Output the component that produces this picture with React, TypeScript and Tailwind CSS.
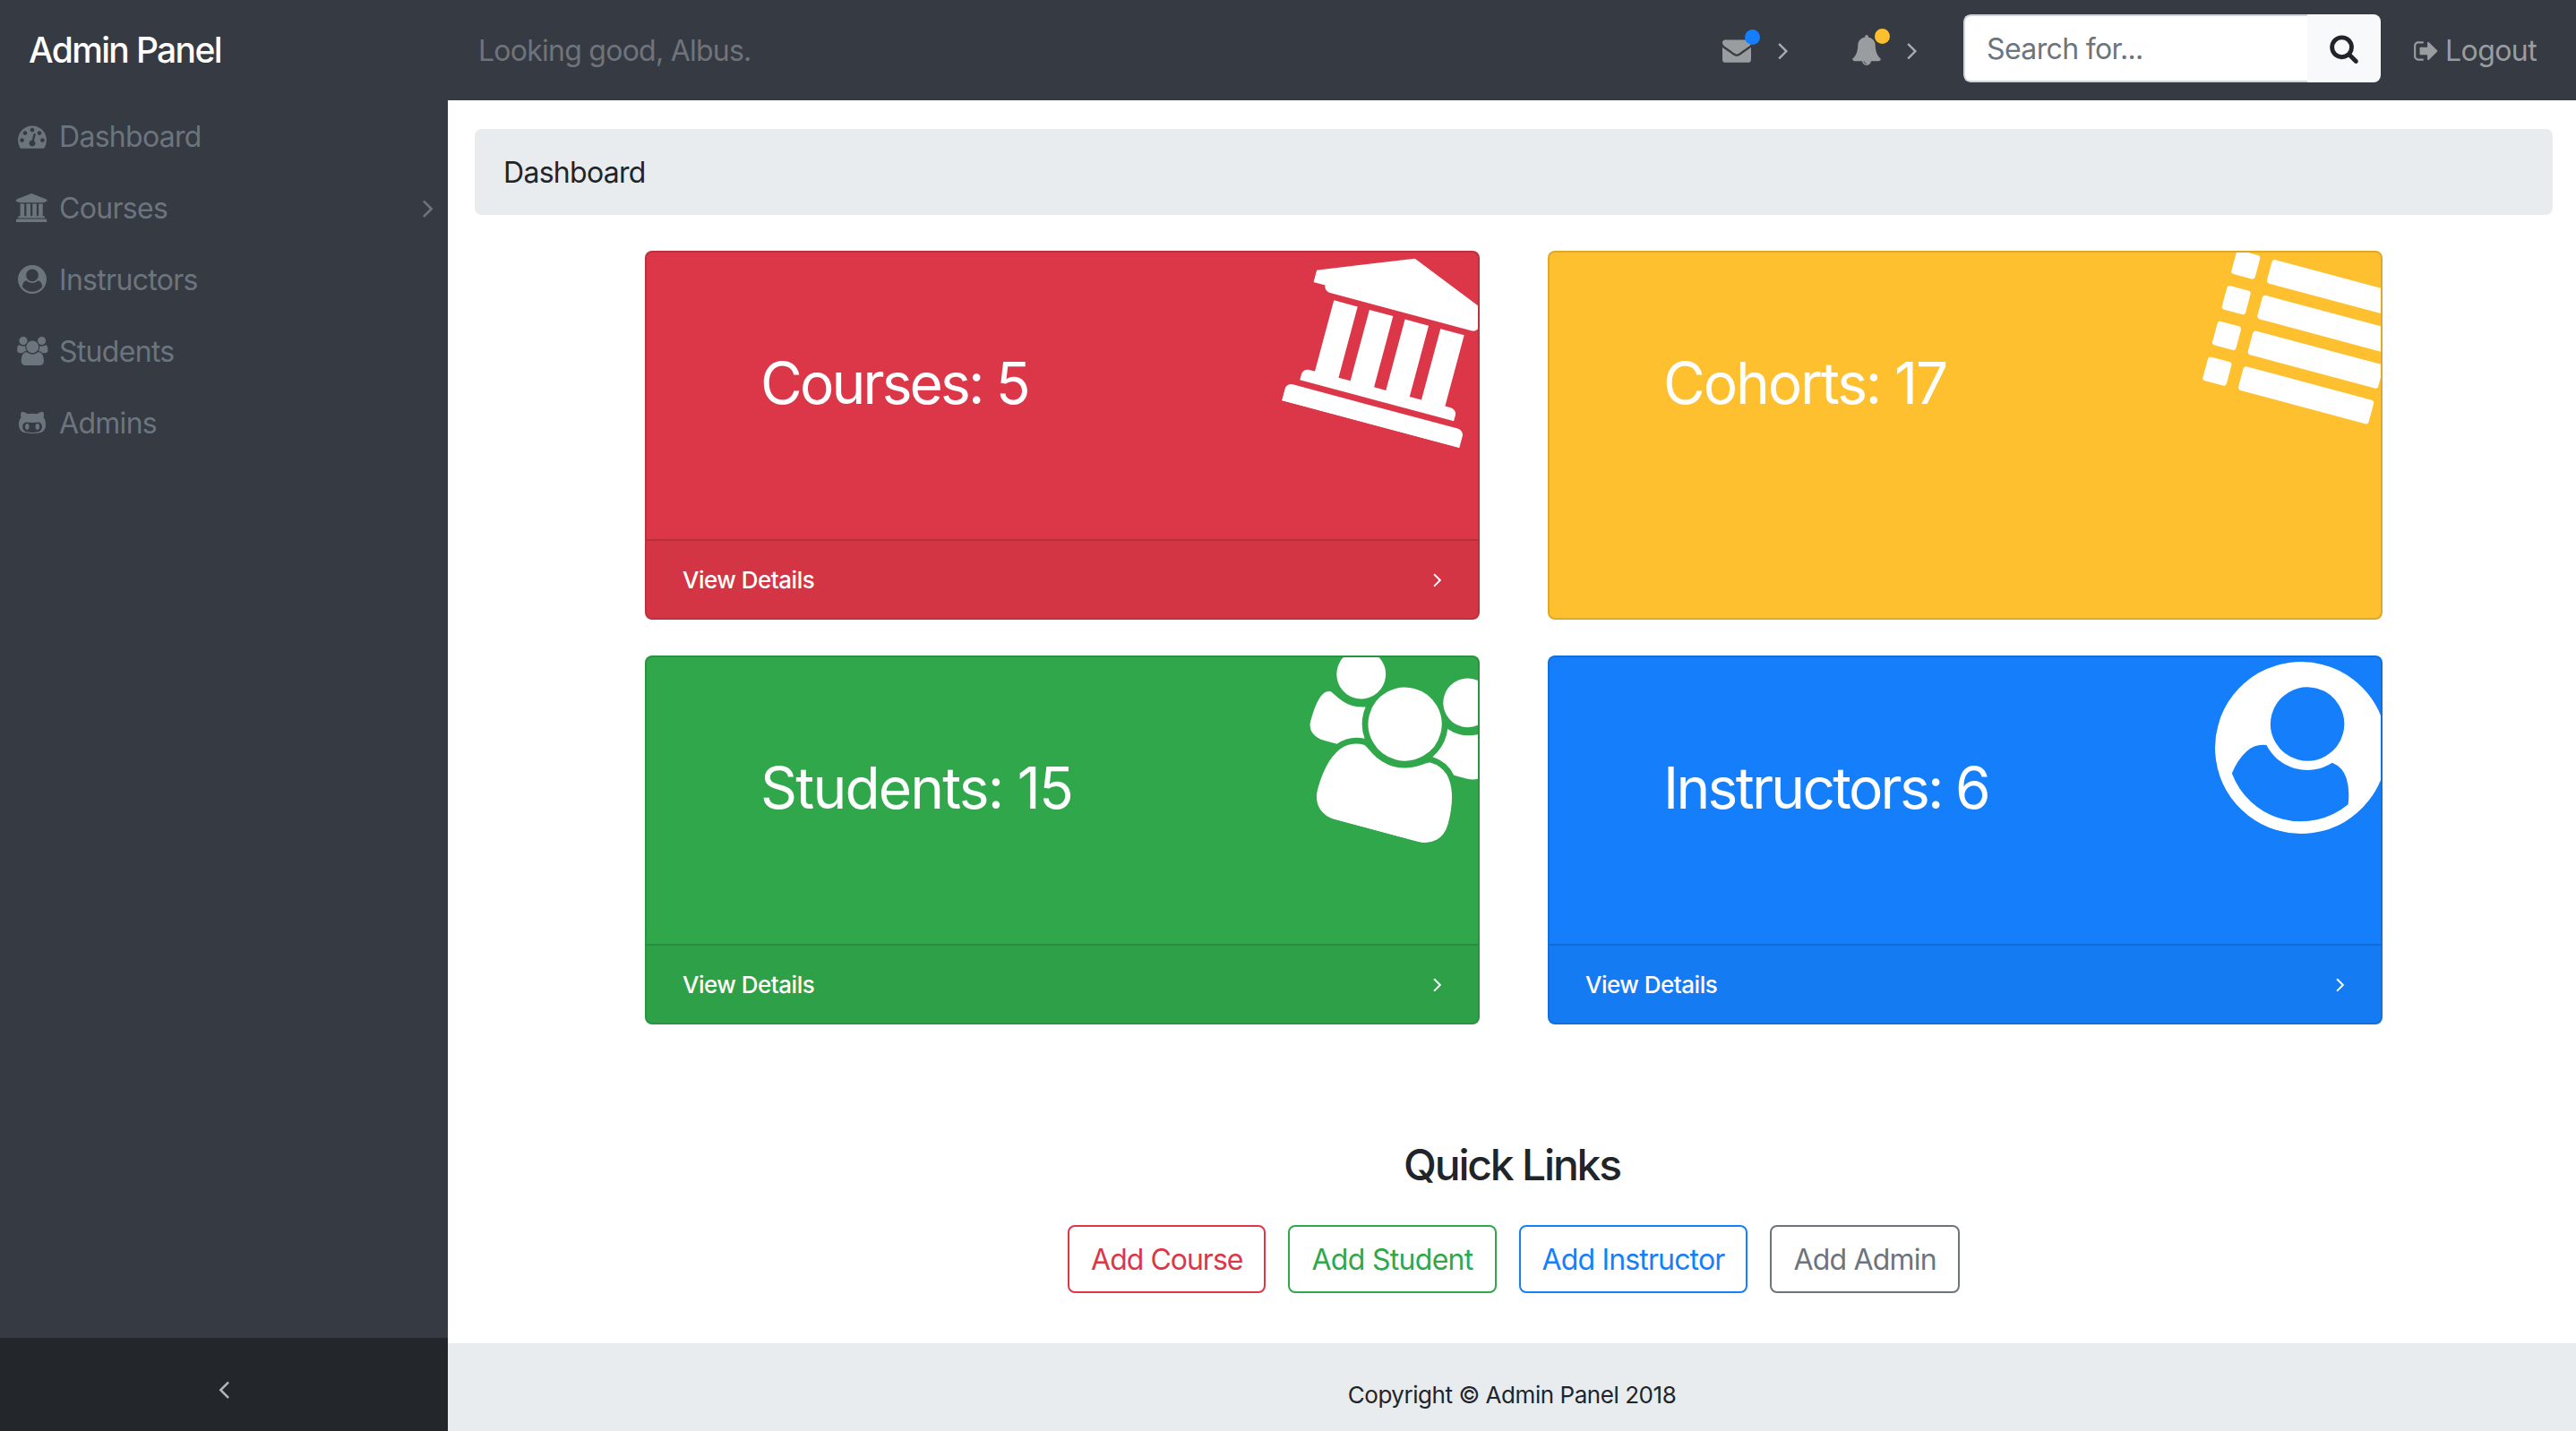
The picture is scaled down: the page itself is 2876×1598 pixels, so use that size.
import React from "react";
import { FaGithubAlt } from "react-icons/fa";

const P = {
  dash: "M384 1152q0-53-37.5-90.5t-90.5-37.5-90.5 37.5-37.5 90.5 37.5 90.5 90.5 37.5 90.5-37.5 37.5-90.5zm192-448q0-53-37.5-90.5t-90.5-37.5-90.5 37.5-37.5 90.5 37.5 90.5 90.5 37.5 90.5-37.5 37.5-90.5zm428 481l101-382q6-26-7.5-48.5t-38.5-29.5-48 6.5-30 39.5l-101 382q-60 5-107 43.5t-63 98.5q-20 77 20 146t117 89 146-20 89-117q16-60-6-117t-72-91zm660-33q0-53-37.5-90.5t-90.5-37.5-90.5 37.5-37.5 90.5 37.5 90.5 90.5 37.5 90.5-37.5 37.5-90.5zm-640-640q0-53-37.5-90.5t-90.5-37.5-90.5 37.5-37.5 90.5 37.5 90.5 90.5 37.5 90.5-37.5 37.5-90.5zm448 192q0-53-37.5-90.5t-90.5-37.5-90.5 37.5-37.5 90.5 37.5 90.5 90.5 37.5 90.5-37.5 37.5-90.5zm320 448q0 261-141 483-19 29-54 29h-1402q-35 0-54-29-141-221-141-483 0-182 71-348t191-286 286-191 348-71 348 71 286 191 191 286 71 348z",
  bank: "M960 0l960 384v128h-128q0 26-20.5 45t-48.5 19h-1526q-28 0-48.5-19t-20.5-45h-128v-128zm-704 640h256v768h128v-768h256v768h128v-768h256v768h128v-768h256v768h59q28 0 48.5 19t20.5 45v64h-1664v-64q0-26 20.5-45t48.5-19h59v-768zm1595 960q28 0 48.5 19t20.5 45v128h-1920v-128q0-26 20.5-45t48.5-19h1782z",
  users: "M657 896q-162 5-265 128h-134q-82 0-138-40.5t-56-118.5q0-353 124-353 6 0 43.5 21t97.5 42.5 119 21.5q67 0 133-23-5 37-5 66 0 139 81 256zm1071 637q0 120-73 189.5t-194 69.5h-874q-121 0-194-69.5t-73-189.5q0-53 3.5-103.5t14-109 26.5-108.5 43-97.5 62-81 85.5-53.5 111.5-20q10 0 43 21.5t73 48 107 48 135 21.5 135-21.5 107-48 73-48 43-21.5q61 0 111.5 20t85.5 53.5 62 81 43 97.5 26.5 108.5 14 109 3.5 103.5zm-1024-1277q0 106-75 181t-181 75-181-75-75-181 75-181 181-75 181 75 75 181zm704 384q0 159-112.5 271.5t-271.5 112.5-271.5-112.5-112.5-271.5 112.5-271.5 271.5-112.5 271.5 112.5 112.5 271.5zm576 225q0 78-56 118.5t-138 40.5h-134q-103-123-265-128 81-117 81-256 0-29-5-66 66 23 133 23 59 0 119-21.5t97.5-42.5 43.5-21q124 0 124 353zm-128-609q0 106-75 181t-181 75-181-75-75-181 75-181 181-75 181 75 75 181z",
  userc: "M1523 1339q-22-155-87.5-257.5t-184.5-118.5q-67 74-159.5 115.5t-195.5 41.5-195.5-41.5-159.5-115.5q-119 16-184.5 118.5t-87.5 257.5q106 150 271 237.5t356 87.5 356-87.5 271-237.5zm-243-699q0-159-112.5-271.5t-271.5-112.5-271.5 112.5-112.5 271.5 112.5 271.5 271.5 112.5 271.5-112.5 112.5-271.5zm512 256q0 182-71 347.5t-190.5 286-285.5 191.5-349 71q-182 0-348-71t-286-191-191-286-71-348 71-348 191-286 286-191 348-71 348 71 286 191 191 286 71 348z",
  mail: "M1792 710v794q0 66-47 113t-113 47h-1472q-66 0-113-47t-47-113v-794q44 49 101 87 362 246 497 345 57 42 92.5 65.5t94.5 48 110 24.5h2q51 0 110-24.5t94.5-48 92.5-65.5q170-123 498-345 57-39 100-87zm0-294q0 79-49 151t-122 123q-376 261-468 325-10 7-42.5 30.5t-54 38-52 32.5-57.5 27-50 9h-2q-23 0-50-9t-57.5-27-52-32.5-54-38-42.5-30.5q-91-64-262-182.5t-205-142.5q-62-42-117-115.5t-55-136.5q0-78 41.5-130t118.5-52h1472q65 0 112.5 47t47.5 113z",
  bell: "M912 1696q0-16-16-16-59 0-101.5-42.5t-42.5-101.5q0-16-16-16t-16 16q0 73 51.5 124.5t124.5 51.5q16 0 16-16zm816-288q0 52-38 90t-90 38h-448q0 106-75 181t-181 75-181-75-75-181h-448q-52 0-90-38t-38-90q50-42 91-88t85-119.5 74.5-158.5 50-206 19.5-260q0-152 117-282.5t307-158.5q-8-19-8-39 0-40 28-68t68-28 68 28 28 68q0 20-8 39 190 28 307 158.5t117 282.5q0 139 19.5 260t50 206 74.5 158.5 85 119.5 91 88z",
  out: "M704 1440q0 4 1 20t.5 26.5-3 23.5-10 19.5-20.5 6.5h-320q-119 0-203.5-84.5t-84.5-203.5v-704q0-119 84.5-203.5t203.5-84.5h320q13 0 22.5 9.5t9.5 22.5q0 4 1 20t.5 26.5-3 23.5-10 19.5-20.5 6.5h-320q-66 0-113 47t-47 113v704q0 66 47 113t113 47h312l11.5 1 11.5 3 8 5.5 7 9 2 13.5zm928-544q0 26-19 45l-544 544q-19 19-45 19t-45-19-19-45v-288h-448q-26 0-45-19t-19-45v-384q0-26 19-45t45-19h448v-288q0-26 19-45t45-19 45 19l544 544q19 19 19 45z",
  search: "M1216 832q0-185-131.5-316.5t-316.5-131.5-316.5 131.5-131.5 316.5 131.5 316.5 316.5 131.5 316.5-131.5 131.5-316.5zm512 832q0 52-38 90t-90 38q-54 0-90-38l-343-342q-179 124-399 124-143 0-273.5-55.5t-225-150-150-225-55.5-273.5 55.5-273.5 150-225 225-150 273.5-55.5 273.5 55.5 225 150 150 225 55.5 273.5q0 220-124 399l343 343q37 37 37 90z",
  right: "M1171 960q0 13-10 23l-466 466q-10 10-23 10t-23-10l-50-50q-10-10-10-23t10-23l393-393-393-393q-10-10-10-23t10-23l50-50q10-10 23-10t23 10l466 466q10 10 10 23z",
  left: "M1203 544q0 13-10 23l-393 393 393 393q10 10 10 23t-10 23l-50 50q-10 10-23 10t-23-10l-466-466q-10-10-10-23t10-23l466-466q10-10 23-10t23 10l50 50q10 10 10 23z",
};

function Ic({ d, w = 1792, className }: { d: string; w?: number; className?: string }) {
  return (
    <svg viewBox={`0 0 ${w} 1792`} fill="currentColor" className={className}>
      <path d={d} />
    </svg>
  );
}

function ListGlyph({ className }: { className?: string }) {
  const ys = [128, 512, 896, 1280];
  return (
    <svg viewBox="0 0 1792 1792" fill="currentColor" className={className}>
      {ys.map((y) => (
        <g key={y}>
          <rect x="0" y={y} width="256" height="256" rx="32" />
          <rect x="384" y={y} width="1408" height="256" rx="32" />
        </g>
      ))}
    </svg>
  );
}

function NavItem({ icon, label, chevron }: { icon: React.ReactNode; label: string; chevron?: boolean }) {
  return (
    <div className="flex h-[80px] items-center pl-[16px] pr-[5px] text-[#6c757d]">
      <span className="flex w-[40px] justify-center">{icon}</span>
      <span className="ml-[10px] flex-1 pt-[2px] text-[32px] tracking-[-0.7px]">{label}</span>
      {chevron && <Ic d={P.right} className="h-[34px] w-[34px]" />}
    </div>
  );
}

function StatCard({
  title,
  bg,
  icon,
  track,
  footer = true,
}: {
  title: string;
  bg: string;
  icon: React.ReactNode;
  track: string;
  footer?: boolean;
}) {
  return (
    <div className={`relative flex h-[412px] flex-col overflow-hidden rounded-[8px] border-2 border-black/[.125] text-white ${bg}`}>
      {icon}
      <div className={`relative flex-1 pl-[127px] pt-[107px] text-[64px] leading-[77px] ${track}`}>{title}</div>
      {footer && (
        <div className="relative flex h-[88px] items-center justify-between border-t-2 border-black/[.125] bg-black/[.03] pl-[40px] pr-[32px] text-[26px] font-medium tracking-[-0.5px]">
          <span>View Details</span>
          <Ic d={P.right} className="h-[26px] w-[26px]" />
        </div>
      )}
    </div>
  );
}

function OutlineBtn({ label, cls }: { label: string; cls: string }) {
  return (
    <div className={`flex h-[76px] items-center rounded-[8px] border-2 px-[24px] pt-[2px] text-[32px] ${cls}`}>{label}</div>
  );
}

export default function App() {
  const bigIcon = "absolute rotate-[15deg] h-[192px]";
  return (
    <div className="flex h-screen w-full flex-col overflow-hidden bg-white font-['Inter',sans-serif] text-[#212529]">
      <header className="flex h-[112px] shrink-0 items-center bg-[#363a43]">
        <div className="w-[534px] shrink-0 pl-[32px] text-[39px] font-medium tracking-[-1.65px] text-white">Admin Panel</div>
        <div className="flex-1 pt-[2px] text-[32px] tracking-[-0.75px] text-[#6f747b]">Looking good, Albus.</div>
        <div className="relative ml-auto flex items-center">
          <Ic d={P.mail} className="h-[32px] w-[32px] text-[#9a9da0]" />
          <span className="absolute left-[25px] top-[-7px] h-[17px] w-[17px] rounded-full bg-[#157ffb]" />
          <Ic d={P.right} className="ml-[20px] h-[32px] w-[32px] text-[#a8abae]" />
        </div>
        <div className="relative ml-[60px] flex items-center">
          <Ic d={P.bell} className="h-[34px] w-[34px] text-[#9a9da0]" />
          <span className="absolute left-[26px] top-[-7px] h-[17px] w-[17px] rounded-full bg-[#fec02f]" />
          <Ic d={P.right} className="ml-[18px] h-[32px] w-[32px] text-[#a8abae]" />
        </div>
        <div className="mb-[4px] ml-[41px] flex h-[76px] w-[466px] overflow-hidden rounded-[8px]">
          <div className="flex flex-1 items-center rounded-l-[8px] border-y-2 border-l-2 border-[#ced4da] bg-white pl-[24px] pt-[2px] text-[32px] tracking-[-0.65px] text-[#6c757d]">
            Search for...
          </div>
          <div className="flex w-[82px] items-center justify-center bg-[#f8f9fa] text-[#212529]">
            <Ic d={P.search} className="h-[34px] w-[34px]" />
          </div>
        </div>
        <div className="ml-[36px] mr-[44px] flex items-center pt-[2px] text-[32px] tracking-[-0.6px] text-[#9a9da0]">
          <Ic d={P.out} className="mr-[6px] h-[30px] w-[30px]" />
          Logout
        </div>
      </header>
      <div className="flex min-h-0 flex-1">
        <aside className="flex w-[500px] shrink-0 flex-col bg-[#363a43]">
          <nav className="flex-1">
            <NavItem icon={<Ic d={P.dash} className="h-[32px] w-[32px]" />} label="Dashboard" />
            <NavItem icon={<Ic d={P.bank} w={2048} className="h-[32px] w-[36.6px]" />} label="Courses" chevron />
            <NavItem icon={<Ic d={P.userc} className="h-[32px] w-[32px]" />} label="Instructors" />
            <NavItem icon={<Ic d={P.users} w={2048} className="h-[32px] w-[36.6px]" />} label="Students" />
            <NavItem icon={<FaGithubAlt className="h-[32px] w-[30px]" />} label="Admins" />
          </nav>
          <div className="flex h-[104px] items-center justify-center bg-[#23272b] pt-[10px] text-[#adb5bd]">
            <Ic d={P.left} className="h-[34px] w-[34px]" />
          </div>
        </aside>
        <main className="flex min-w-0 flex-1 flex-col">
          <div className="flex-1">
            <div className="ml-[30px] mr-[26px] mt-[32px] flex h-[96px] items-center rounded-[8px] bg-[#e8ecef] pl-[32px] pt-[2px] text-[32px] tracking-[-0.7px]">
              Dashboard
            </div>
            <div className="ml-[220px] mt-[40px] grid w-[1940px] grid-cols-2 gap-x-[76px] gap-y-[40px]">
              <StatCard
                title="Courses: 5"
                track="tracking-[-2.85px]"
                bg="bg-[#db3748]"
                icon={<Ic d={P.bank} w={2048} className={`${bigIcon} right-[-21px] top-[5px] w-[219px]`} />}
              />
              <StatCard
                title="Cohorts: 17"
                track="tracking-[-2.1px]"
                bg="bg-[#fec02f]"
                footer={false}
                icon={<ListGlyph className={`${bigIcon} right-[-7px] top-[5px] w-[192px]`} />}
              />
              <StatCard
                title="Students: 15"
                track="tracking-[-1.8px]"
                bg="bg-[#30a74b]"
                icon={<Ic d={P.users} w={2048} className={`${bigIcon} right-[-21px] top-[5px] w-[219px]`} />}
              />
              <StatCard
                title="Instructors: 6"
                track="tracking-[-2.7px]"
                bg="bg-[#157ffb]"
                icon={<Ic d={P.userc} className={`${bigIcon} right-[-7px] top-[5px] w-[192px]`} />}
              />
            </div>
            <h3 className="mt-[129px] text-center text-[48px] font-medium leading-[56px] tracking-[-2.2px]">Quick Links</h3>
            <div className="mt-[39px] flex justify-center gap-[25px] pl-[4px]">
              <OutlineBtn label="Add Course" cls="border-[#db3748] text-[#db3748] tracking-[-1px]" />
              <OutlineBtn label="Add Student" cls="border-[#30a74b] text-[#30a74b] tracking-[-0.7px]" />
              <OutlineBtn label="Add Instructor" cls="border-[#157ffb] text-[#157ffb] tracking-[-0.85px]" />
              <OutlineBtn label="Add Admin" cls="border-[#6c757d] text-[#6c757d] tracking-[-0.8px]" />
            </div>
          </div>
          <footer className="flex h-[98px] shrink-0 items-center justify-center bg-[#e8ecef] pt-[16px] text-[26px] tracking-[-0.45px]">
            Copyright © Admin Panel 2018
          </footer>
        </main>
      </div>
    </div>
  );
}
